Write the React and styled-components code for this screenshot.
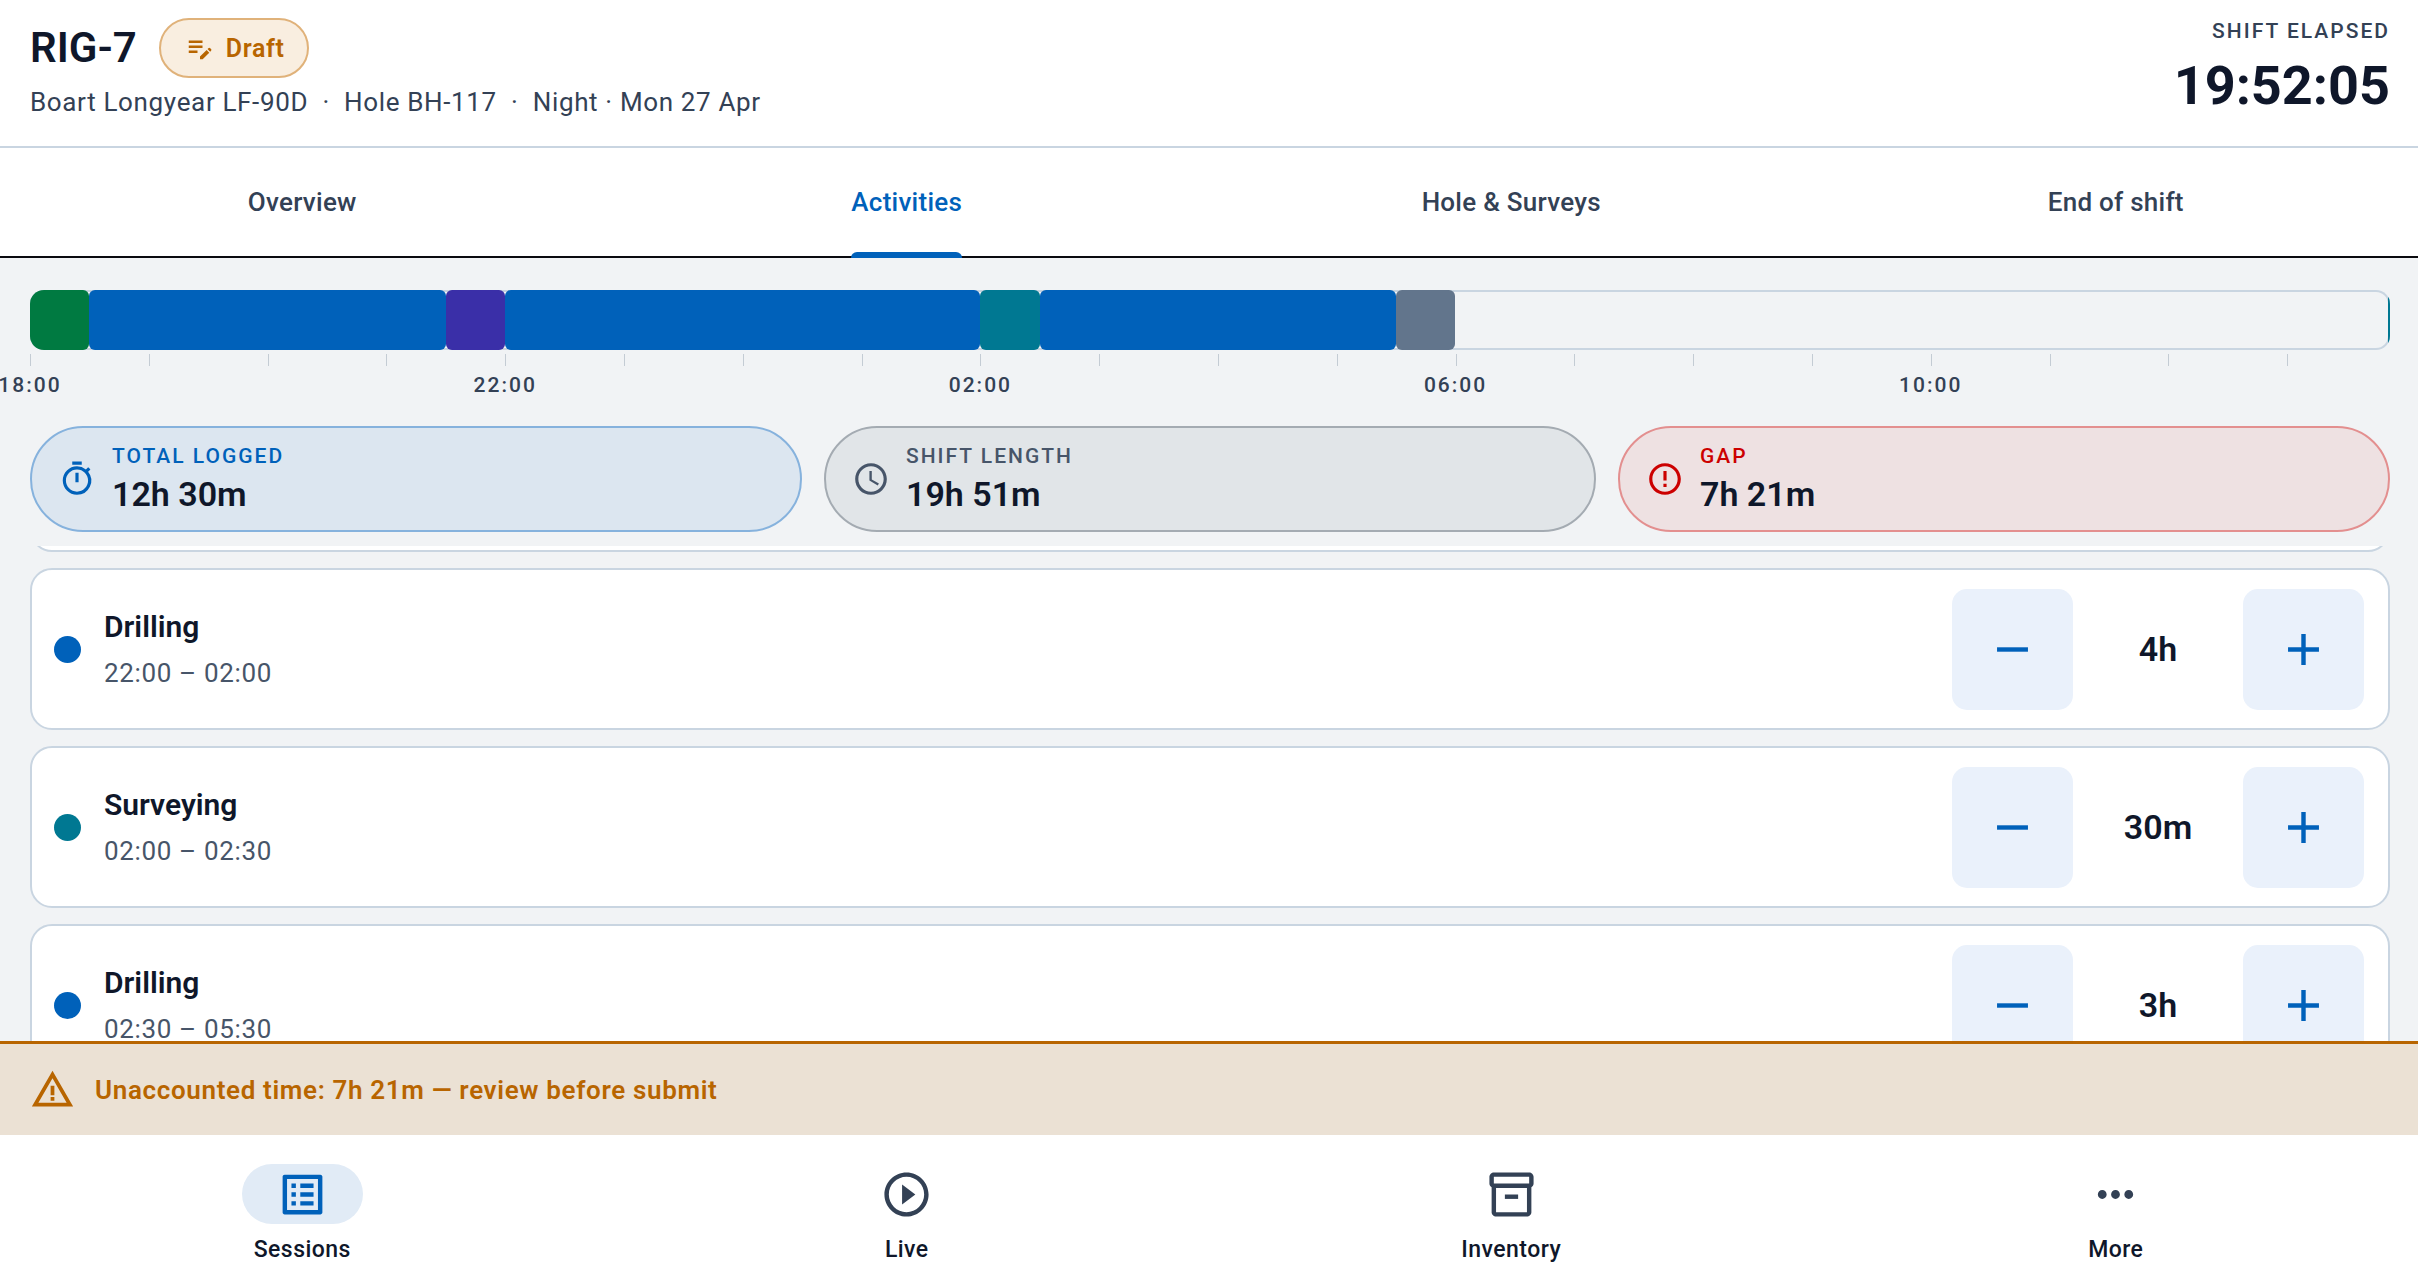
import React, { useLayoutEffect, useRef, useState } from "react";
import styled, { createGlobalStyle } from "styled-components";
import {
  MdEditNote,
  MdOutlineTimer,
  MdAccessTime,
  MdErrorOutline,
  MdRemove,
  MdAdd,
  MdWarningAmber,
  MdOutlineListAlt,
  MdPlayCircleOutline,
  MdOutlineInventory2,
  MdMoreHoriz,
} from "react-icons/md";

const color = {
  ink: "#0f172a",
  muted: "#334155",
  slate: "#475569",
  blue: "#0061ba",
  green: "#007a41",
  purple: "#3a2fa8",
  teal: "#007892",
  grey: "#62758c",
  red: "#cc0000",
  amber: "#b86500",
  line: "#c9d5e1",
  page: "#f1f3f5",
};

const GlobalStyle = createGlobalStyle`
  *, *::before, *::after { box-sizing: border-box; }
  body { margin: 0; background: ${color.page}; }
  button { font: inherit; border: 0; padding: 0; cursor: pointer; }
`;

const Screen = styled.div`
  display: flex;
  flex-direction: column;
  height: 100vh;
  overflow: hidden;
  color: ${color.ink};
  background: ${color.page};
  font-family: Roboto, "Liberation Sans", sans-serif;
`;

const Header = styled.header`
  display: flex;
  justify-content: space-between;
  align-items: flex-start;
  padding: 18px 28px 26px 30px;
  background: #fff;
  border-bottom: 2px solid ${color.line};
`;

const TitleRow = styled.div`
  display: flex;
  align-items: center;
  gap: 22px;
`;

const RigName = styled.h1`
  margin: 0;
  font-size: 42px;
  line-height: 60px;
  font-weight: 600;
`;

const StatusPill = styled.span`
  display: inline-flex;
  align-items: center;
  gap: 11px;
  height: 60px;
  padding: 0 22px 0 24px;
  border: 2px solid #e0b27a;
  border-radius: 30px;
  background: #f9eee0;
  color: ${color.amber};
  font-size: 25px;
  font-weight: 600;
  letter-spacing: 0.025em;
`;

const RigDetails = styled.p`
  margin: 6px 0 0;
  font-size: 26px;
  line-height: 36px;
  color: ${color.muted};
  letter-spacing: 0.025em;
  white-space: pre;
`;

const Elapsed = styled.div`
  text-align: right;
`;

const ElapsedLabel = styled.div`
  font-size: 21px;
  line-height: 26px;
  font-weight: 500;
  letter-spacing: 2px;
  color: ${color.muted};
`;

const ElapsedTime = styled.time`
  display: block;
  margin-top: 10px;
  font-size: 54px;
  line-height: 64px;
  font-weight: 700;
`;

const Tabs = styled.nav`
  display: flex;
  height: 110px;
  background: #fff;
  border-bottom: 2px solid #0a0a0f;
`;

const Tab = styled.button`
  flex: 1;
  display: flex;
  justify-content: center;
  background: none;
  font-size: 26px;
  font-weight: 500;
  letter-spacing: 0.01em;
  color: ${(p) => (p.$active ? color.blue : color.muted)};
`;

const TabLabel = styled.span`
  display: flex;
  align-items: center;
  height: 100%;
  position: relative;

  &::after {
    content: "";
    position: absolute;
    inset: auto 0 -2px;
    height: 6px;
    border-radius: 6px 6px 0 0;
    background: ${(p) => (p.$active ? color.blue : "transparent")};
  }
`;

const Body = styled.main`
  flex: 1;
  min-height: 0;
  display: flex;
  flex-direction: column;
  padding: 32px 28px 0 30px;
`;

const TimelineBar = styled.div`
  display: flex;
  height: 60px;
  border-radius: 14px;
  overflow: hidden;
  box-shadow: inset 0 0 0 2px ${color.line};
`;

const Segment = styled.div`
  flex: ${(p) => p.$minutes} 1 0;
  border-radius: 6px;
  background: ${(p) => p.$color};
`;

const EndMark = styled.div`
  width: 2px;
  background: ${color.teal};
`;

const Axis = styled.div`
  display: flex;
  height: 48px;
  padding: 4px 2px 0 0;
`;

const Hour = styled.div`
  flex: ${(p) => p.$minutes} 1 0;
  min-width: 0;
`;

const Tick = styled.div`
  width: 1px;
  height: 12px;
  background: #c4ccd4;
`;

const HourLabel = styled.div`
  display: flex;
  justify-content: center;
  width: 0;
  margin-top: 6px;
  font-size: 21px;
  line-height: 26px;
  font-weight: 500;
  letter-spacing: 2px;
  color: ${color.muted};
  white-space: nowrap;
`;

const Stats = styled.section`
  display: flex;
  gap: 22px;
  margin-top: 28px;
`;

const Stat = styled.div`
  flex: 1;
  display: flex;
  align-items: center;
  gap: 16px;
  height: 106px;
  padding: 0 26px;
  border: 2px solid ${(p) => p.$edge};
  border-radius: 53px;
  background: ${(p) => p.$fill};
  color: ${(p) => p.$tint};
`;

const StatLabel = styled.div`
  font-size: 21px;
  line-height: 28px;
  font-weight: 500;
  letter-spacing: 2px;
`;

const StatValue = styled.div`
  margin-top: 2px;
  font-size: 34px;
  line-height: 44px;
  font-weight: 600;
  color: ${color.ink};
`;

const SessionList = styled.ul`
  flex: 1;
  min-height: 0;
  margin: 14px 0 0;
  padding: 0;
  list-style: none;
  overflow-y: auto;
  scrollbar-width: none;
`;

const ROW_HEIGHT = 162;
const ROW_GAP = 16;
const ROW_INSET = 20;

const Session = styled.li`
  display: flex;
  align-items: center;
  height: ${ROW_HEIGHT}px;
  padding: 0 24px 0 22px;
  border: 2px solid ${color.line};
  border-radius: 22px;
  background: #fff;

  & + & {
    margin-top: ${ROW_GAP}px;
  }
`;

const Dot = styled.span`
  width: 27px;
  height: 27px;
  margin-right: 23px;
  border-radius: 50%;
  background: ${(p) => p.$color};
`;

const SessionText = styled.div`
  flex: 1;
`;

const SessionName = styled.div`
  font-size: 30px;
  line-height: 42px;
  font-weight: 600;
`;

const SessionTime = styled.div`
  margin-top: 6px;
  font-size: 26px;
  line-height: 38px;
  letter-spacing: 0.025em;
  color: ${color.slate};
`;

const StepButton = styled.button`
  display: grid;
  place-items: center;
  width: 121px;
  height: 121px;
  border-radius: 15px;
  background: #eaf1fb;
  color: ${color.blue};
`;

const Duration = styled.output`
  width: 170px;
  text-align: center;
  font-size: 34px;
  font-weight: 600;
`;

const Warning = styled.div`
  display: flex;
  align-items: center;
  gap: 20px;
  height: 94px;
  padding: 0 30px;
  border-top: 3px solid ${color.amber};
  background: #ebe1d4;
  color: ${color.amber};
  font-size: 26px;
  font-weight: 600;
  letter-spacing: 0.025em;
`;

const BottomNav = styled.nav`
  display: flex;
  height: 143px;
  background: #fff;
`;

const NavItem = styled.button`
  flex: 1;
  display: flex;
  flex-direction: column;
  align-items: center;
  padding-top: 29px;
  background: none;
  font-size: 23px;
  line-height: 32px;
  font-weight: 500;
  letter-spacing: 0.02em;
  color: ${color.ink};
`;

const NavIcon = styled.span`
  display: grid;
  place-items: center;
  width: 121px;
  height: 60px;
  margin-bottom: 10px;
  border-radius: 30px;
  background: ${(p) => (p.$active ? "#e1ebf6" : "transparent")};
  color: ${(p) => (p.$active ? color.blue : color.muted)};
`;

const SHIFT_MINUTES = 1191;

const segments = [
  { minutes: 30, color: color.green },
  { minutes: 180, color: color.blue },
  { minutes: 30, color: color.purple },
  { minutes: 240, color: color.blue },
  { minutes: 30, color: color.teal },
  { minutes: 180, color: color.blue },
  { minutes: 30, color: color.grey },
  { minutes: 471, color: "transparent" },
];

// One cell per hour; every fourth hour from 18:00 to 10:00 carries a label.
const hours = Array.from({ length: 20 }, (_, i) => ({
  minutes: Math.min(60, SHIFT_MINUTES - i * 60),
  label: i % 4 === 0 ? `${String((18 + i) % 24).padStart(2, "0")}:00` : "",
}));

const stats = [
  { label: "TOTAL LOGGED", value: "12h 30m", icon: MdOutlineTimer, tint: color.blue, edge: "#86b2dd", fill: "#dce6f0" },
  { label: "SHIFT LENGTH", value: "19h 51m", icon: MdAccessTime, tint: color.slate, edge: "#a4abb2", fill: "#e1e5e8" },
  { label: "GAP", value: "7h 21m", icon: MdErrorOutline, tint: color.red, edge: "#e38f8f", fill: "#eee1e2" },
];

const initialSessions = [
  { name: "Servicing", time: "21:30 – 22:00", minutes: 30, color: color.purple },
  { name: "Drilling", time: "22:00 – 02:00", minutes: 240, color: color.blue },
  { name: "Surveying", time: "02:00 – 02:30", minutes: 30, color: color.teal },
  { name: "Drilling", time: "02:30 – 05:30", minutes: 180, color: color.blue },
];

const tabs = ["Overview", "Activities", "Hole & Surveys", "End of shift"];

const navItems = [
  { label: "Sessions", icon: MdOutlineListAlt },
  { label: "Live", icon: MdPlayCircleOutline },
  { label: "Inventory", icon: MdOutlineInventory2 },
  { label: "More", icon: MdMoreHoriz },
];

const START_SCROLL = 156;

const formatMinutes = (m) =>
  [Math.floor(m / 60) ? `${Math.floor(m / 60)}h` : "", m % 60 || m === 0 ? `${m % 60}m` : ""]
    .filter(Boolean)
    .join(" ");

export default function App() {
  const [tab, setTab] = useState("Activities");
  const [section, setSection] = useState("Sessions");
  const [sessions, setSessions] = useState(initialSessions);
  const [scroll, setScroll] = useState(START_SCROLL);
  const list = useRef(null);

  useLayoutEffect(() => {
    list.current.scrollTop = START_SCROLL;
  }, []);

  const step = (index, delta) =>
    setSessions((rows) =>
      rows.map((r, i) => (i === index ? { ...r, minutes: Math.max(0, r.minutes + delta) } : r))
    );

  // Rows whose content has scrolled past the top edge keep only their frame.
  const hasContentInView = (i) =>
    i * (ROW_HEIGHT + ROW_GAP) + ROW_HEIGHT - ROW_INSET > scroll;

  return (
    <Screen>
      <GlobalStyle />
      <Header>
        <div>
          <TitleRow>
            <RigName>RIG-7</RigName>
            <StatusPill>
              <MdEditNote size={30} />
              Draft
            </StatusPill>
          </TitleRow>
          <RigDetails>{"Boart Longyear LF-90D  ·  Hole BH-117  ·  Night · Mon 27 Apr"}</RigDetails>
        </div>
        <Elapsed>
          <ElapsedLabel>SHIFT ELAPSED</ElapsedLabel>
          <ElapsedTime>19:52:05</ElapsedTime>
        </Elapsed>
      </Header>

      <Tabs>
        {tabs.map((t) => (
          <Tab key={t} $active={t === tab} onClick={() => setTab(t)}>
            <TabLabel $active={t === tab}>{t}</TabLabel>
          </Tab>
        ))}
      </Tabs>

      <Body>
        <TimelineBar>
          {segments.map((s, i) => (
            <Segment key={i} $minutes={s.minutes} $color={s.color} />
          ))}
          <EndMark />
        </TimelineBar>
        <Axis>
          {hours.map((h, i) => (
            <Hour key={i} $minutes={h.minutes}>
              <Tick />
              {h.label && <HourLabel>{h.label}</HourLabel>}
            </Hour>
          ))}
        </Axis>

        <Stats>
          {stats.map(({ label, value, icon: Icon, tint, edge, fill }) => (
            <Stat key={label} $tint={tint} $edge={edge} $fill={fill}>
              <Icon size={38} />
              <div>
                <StatLabel>{label}</StatLabel>
                <StatValue>{value}</StatValue>
              </div>
            </Stat>
          ))}
        </Stats>

        <SessionList ref={list} onScroll={(e) => setScroll(e.currentTarget.scrollTop)}>
          {sessions.map((s, i) => (
            <Session key={s.time}>
              {hasContentInView(i) && (
                <>
                  <Dot $color={s.color} />
                  <SessionText>
                    <SessionName>{s.name}</SessionName>
                    <SessionTime>{s.time}</SessionTime>
                  </SessionText>
                  <StepButton aria-label="Decrease" onClick={() => step(i, -30)}>
                    <MdRemove size={53} />
                  </StepButton>
                  <Duration>{formatMinutes(s.minutes)}</Duration>
                  <StepButton aria-label="Increase" onClick={() => step(i, 30)}>
                    <MdAdd size={53} />
                  </StepButton>
                </>
              )}
            </Session>
          ))}
        </SessionList>
      </Body>

      <Warning role="status">
        <MdWarningAmber size={45} />
        Unaccounted time: 7h 21m — review before submit
      </Warning>

      <BottomNav>
        {navItems.map(({ label, icon: Icon }) => (
          <NavItem key={label} onClick={() => setSection(label)}>
            <NavIcon $active={label === section}>
              <Icon size={53} />
            </NavIcon>
            {label}
          </NavItem>
        ))}
      </BottomNav>
    </Screen>
  );
}
